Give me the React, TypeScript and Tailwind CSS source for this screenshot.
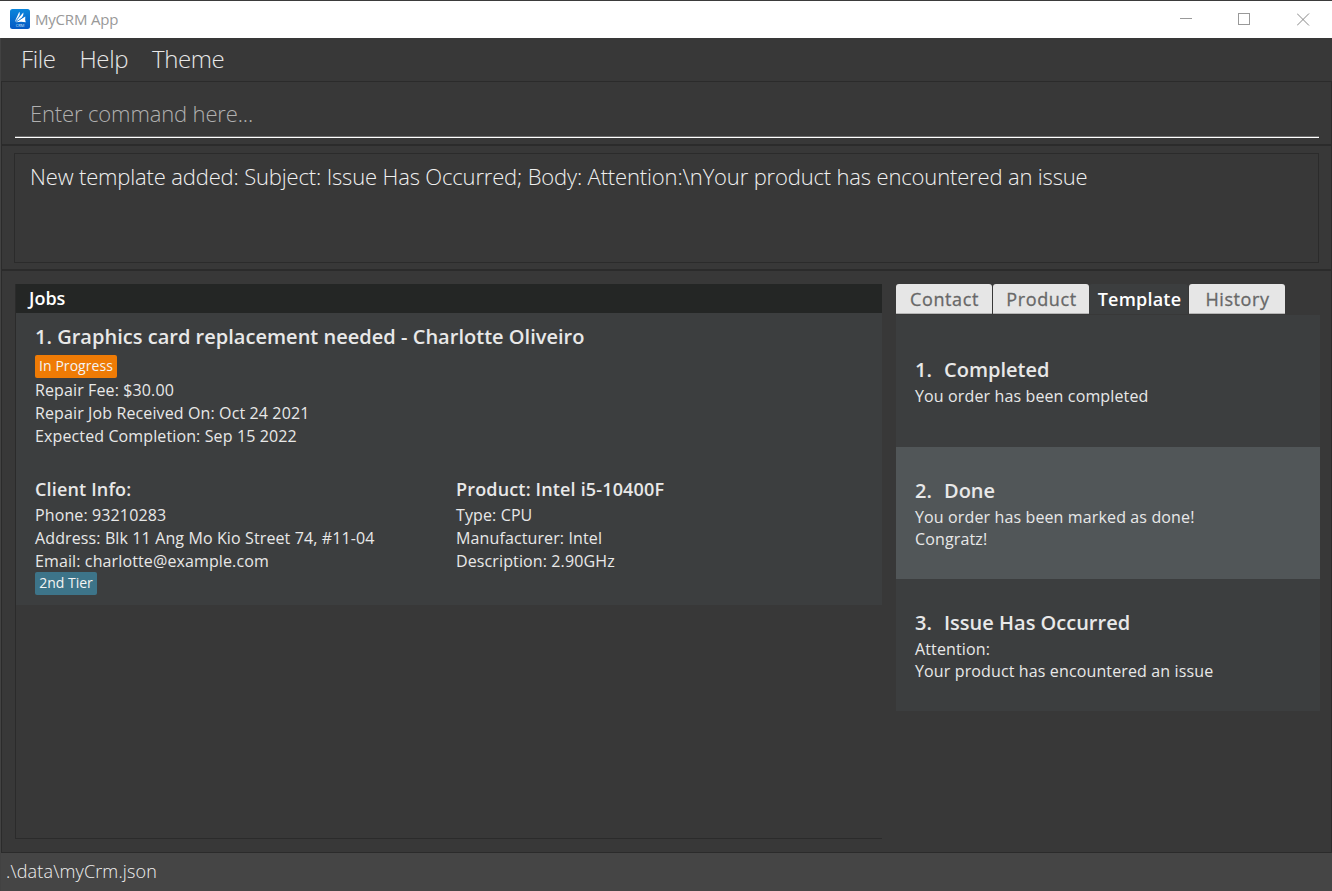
import React from "react";

const templates = [
  { id: 1, title: "Completed", lines: ["You order has been completed"], selected: false },
  { id: 2, title: "Done", lines: ["You order has been marked as done!", "Congratz!"], selected: true },
  { id: 3, title: "Issue Has Occurred", lines: ["Attention:", "Your product has encountered an issue"], selected: false },
];

function AppIcon() {
  return (
    <svg width="20" height="20" viewBox="0 0 20 20">
      <defs>
        <linearGradient id="appIcon" x1="0" y1="0" x2="0" y2="1">
          <stop offset="0" stopColor="#0a86dc" />
          <stop offset="1" stopColor="#0559c4" />
        </linearGradient>
      </defs>
      <rect width="20" height="20" rx="2.5" fill="url(#appIcon)" />
      <path d="M4.600 13 L9.300 2.800 C10.600 5.500 9.300 8.500 4.600 13Z" fill="#fff" />
      <path d="M5.200 13 L13.300 3.500 C14 7 11.500 10 5.200 13Z" fill="#fff" />
      <path d="M5.800 13.300 L15.300 7.600 C15.300 9.500 14.800 11.500 15.800 13.300 C12.500 12.500 9.500 12.600 5.800 13.300Z" fill="#fff" />
      <path d="M5.800 12 L10 6.300 M7 12.600 L13.500 8" stroke="#0a72d0" strokeWidth="0.500" />
      <text x="10" y="17.700" textAnchor="middle" fontSize="4" fill="#d5e6f8" className="font-['Open_Sans',sans-serif]">CRM</text>
    </svg>
  );
}

function TitleBar() {
  return (
    <header className="flex h-[38px] items-start border-t border-[#3b3b3b] bg-white pl-[10px] pr-[22px]">
      <div className="mt-2">
        <AppIcon />
      </div>
      <span className="ml-[5px] mt-2 text-[15px] leading-5 tracking-[-0.2px] text-[#999]">MyCRM App</span>
      <div className="ml-auto mt-3 flex items-center gap-[46px]">
        <svg width="13" height="13" shapeRendering="crispEdges"><path d="M1 5.500H13" stroke="#999" /></svg>
        <svg width="13" height="13" shapeRendering="crispEdges"><rect x="0.500" y="0.500" width="11" height="11" fill="none" stroke="#999" /></svg>
        <svg width="13" height="13"><path d="M0 0.500L12 12.500M12 0.500L0 12.500" stroke="#888" /></svg>
      </div>
    </header>
  );
}

function Tab({ label, active }: { label: string; active?: boolean }) {
  return active ? (
    <div className="h-[30px] w-[99px] rounded-t-[3px] bg-[#3c3e3f] pl-0.5 text-center text-[18px] font-semibold leading-[30px] tracking-[0.2px] text-white">{label}</div>
  ) : (
    <div className="h-[30px] w-24 rounded-t-[3px] border-b border-[#b5b5b5] bg-[#e6e6e6] pl-px text-center text-[18px] leading-[30px] tracking-[0.6px] text-[#686868] [-webkit-text-stroke:0.3px_#686868]">{label}</div>
  );
}

export default function App() {
  return (
    <div className="flex h-[891px] w-[1332px] flex-col overflow-hidden bg-[#383838] font-['Open_Sans',sans-serif] text-[#e8e8e8]">
      <TitleBar />
      <div className="flex grow flex-col border-l border-[#424242]">
        <nav className="flex h-[43px] gap-6 pl-5 text-[24px] font-light leading-[41px] tracking-[-0.4px]">
          <span>File</span>
          <span>Help</span>
          <span>Theme</span>
        </nav>
        <section className="h-16 border border-[#2b2b2b] pl-[13px] pr-3">
          <div className="h-[55px] border-b border-[#6c6c6c] pl-[15px] text-[22px] font-light leading-[62px] tracking-[-0.14px] text-[#b0b0b0]">Enter command here...</div>
          <div className="h-px bg-white" />
        </section>
        <section className="h-[125px] border border-[#2b2b2b] pl-3 pr-3 pt-[7px]">
          <div className="h-[110px] border border-[#2b2b2b] pl-[15px] text-[22px] font-light leading-[45px] tracking-[-0.158px] text-[#f0f0f0]">
            New template added: Subject: Issue Has Occurred; Body: Attention:\nYour product has encountered an issue
          </div>
        </section>
        <main className="flex h-[583px] shrink-0 border border-[#2b2b2b] pl-[13px] pt-[13px]">
          <section className="h-[555px] w-[867px] shrink-0 border-b border-l border-[#2b2b2b]">
            <h2 className="h-[29px] bg-[#242625] pl-[13px] text-[18px] font-semibold leading-[29px] text-white">Jobs</h2>
            <article className="h-[292px] bg-[#3c3e3f] pl-[19px] pt-[11px] text-[16px] leading-[23px] tracking-[0.12px]">
              <h3 className="h-[31px] text-[20px] font-semibold leading-[26px] tracking-[0.02px]">1. Graphics card replacement needed - Charlotte Oliveiro</h3>
              <div className="h-[23px] w-[82px] rounded-[2px] bg-[#ef7b05] text-center text-[14px] leading-[22px] tracking-[0.05px] text-[#f4f4f4]">In Progress</div>
              <div className="mt-px">
                <p>Repair Fee: $30.00</p>
                <p>Repair Job Received On: Oct 24 2021</p>
                <p>Expected Completion: Sep 15 2022</p>
              </div>
              <div className="mt-[30px] grid grid-cols-[421px_1fr]">
                <div>
                  <h4 className="h-[26px] text-[18px] font-semibold tracking-[0.16px]">Client Info:</h4>
                  <p>Phone: 93210283</p>
                  <p>Address: Blk 11 Ang Mo Kio Street 74, #11-04</p>
                  <p>Email: charlotte@example.com</p>
                  <div className="-mt-px h-[23px] w-[62px] rounded-[2px] bg-[#3d7489] text-center text-[14px] leading-[22px] tracking-normal text-[#f4f4f4]">2nd Tier</div>
                </div>
                <div>
                  <h4 className="h-[26px] text-[18px] font-semibold tracking-[0.16px]">Product: Intel i5-10400F</h4>
                  <p>Type: CPU</p>
                  <p>Manufacturer: Intel</p>
                  <p>Description: 2.90GHz</p>
                </div>
              </div>
            </article>
          </section>
          <section className="ml-[14px] w-[424px] shrink-0">
            <div className="flex">
              <Tab label="Contact" />
              <div className="w-px" />
              <Tab label="Product" />
              <Tab label="Template" active />
              <div className="w-px" />
              <Tab label="History" />
            </div>
            <ul className="mt-px">
              {templates.map((t) => (
                <li key={t.id} className={t.selected ? "flex h-[132px] flex-col justify-center bg-[#515658] pl-[19px] pt-0.5" : "flex h-[132px] flex-col justify-center bg-[#3c3e3f] pl-[19px] pt-0.5"}>
                  <h3 className="flex h-7 text-[20px] font-semibold leading-[26px]"><span className="w-[29px]">{t.id}.</span>{t.title}</h3>
                  {t.lines.map((l) => <p key={l} className="text-[16px] leading-[22px] tracking-[0.13px]">{l}</p>)}
                </li>
              ))}
            </ul>
          </section>
        </main>
        <footer className="h-[38px] shrink-0 bg-[#454545] pl-[5px] text-[18px] font-light leading-[37px] tracking-[0.15px] text-[#f0f0f0]">.\data\myCrm.json</footer>
      </div>
    </div>
  );
}
